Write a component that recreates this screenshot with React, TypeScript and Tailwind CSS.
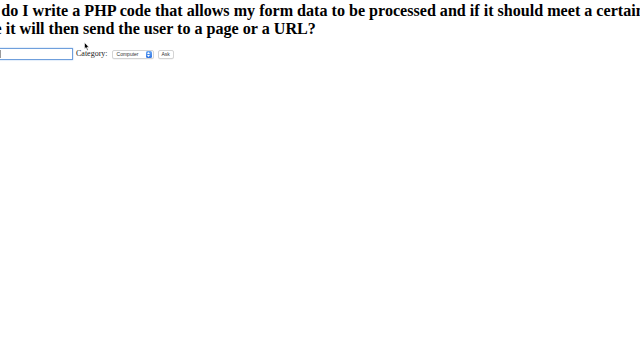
export default function App() {
    return (
        <div className="relative w-[640px] h-[360px] overflow-hidden bg-white text-black">
            <div className="ml-[-35px] w-[700px]">
                <h1 className="pt-[1.5px] w-[695px] text-[16.1px] leading-[18.4px] font-bold font-['Liberation_Serif',serif]">
                    How do I write a PHP code that allows my form data to be processed and if it should meet a certain value it will then send the user to a page or a URL?
                </h1>

                {/* Ask form */}
                <div className="mt-[10px] flex items-center h-[12px]">
                    <div className="w-[108px] h-[12px] border border-[#6f9fdc] shadow-[0_0_1.5px_#9cc0ee] bg-white flex items-center justify-end pr-[71px]">
                        <span className="block w-[2px] h-[8px] bg-[#9a9a9a]" />
                    </div>
                    <span className="ml-[3px] text-[8px] leading-none font-['Liberation_Serif',serif] text-[#222]">Category:</span>
                    <div className="ml-[4px] w-[42px] h-[9px] rounded-[2px] border border-[#d4d4d4] bg-white flex items-center justify-between pl-[4px] pr-[1px] shadow-[0_0.5px_0.5px_rgba(0,0,0,0.08)]">
                        <span className="text-[5px] leading-none font-['Liberation_Sans',sans-serif] text-[#333]">Computer</span>
                        <span className="w-[6px] h-[7px] rounded-[1.5px] bg-gradient-to-b from-[#6aa8f5] to-[#2f72e0] flex flex-col items-center justify-center gap-[1px]">
                            <svg width="3" height="2" viewBox="0 0 3 2"><path d="M0 2 L1.5 0 L3 2 Z" fill="white" /></svg>
                            <svg width="3" height="2" viewBox="0 0 3 2"><path d="M0 0 L1.5 2 L3 0 Z" fill="white" /></svg>
                        </span>
                    </div>
                    <div className="ml-[4px] w-[16px] h-[9px] rounded-[2px] border border-[#d4d4d4] bg-white flex items-center justify-center shadow-[0_0.5px_0.5px_rgba(0,0,0,0.08)]">
                        <span className="text-[5px] leading-none font-['Liberation_Sans',sans-serif] text-[#333]">Ask</span>
                    </div>
                </div>
            </div>

            {/* mouse pointer */}
            <svg className="absolute left-[84px] top-[42px]" width="6" height="9" viewBox="0 0 6 9">
                <path d="M0.5 0.5 L0.5 7 L2 5.6 L3.2 8.3 L4.2 7.9 L3 5.2 L5 5.2 Z" fill="black" stroke="white" strokeWidth="0.6" />
            </svg>
        </div>
    )
}
